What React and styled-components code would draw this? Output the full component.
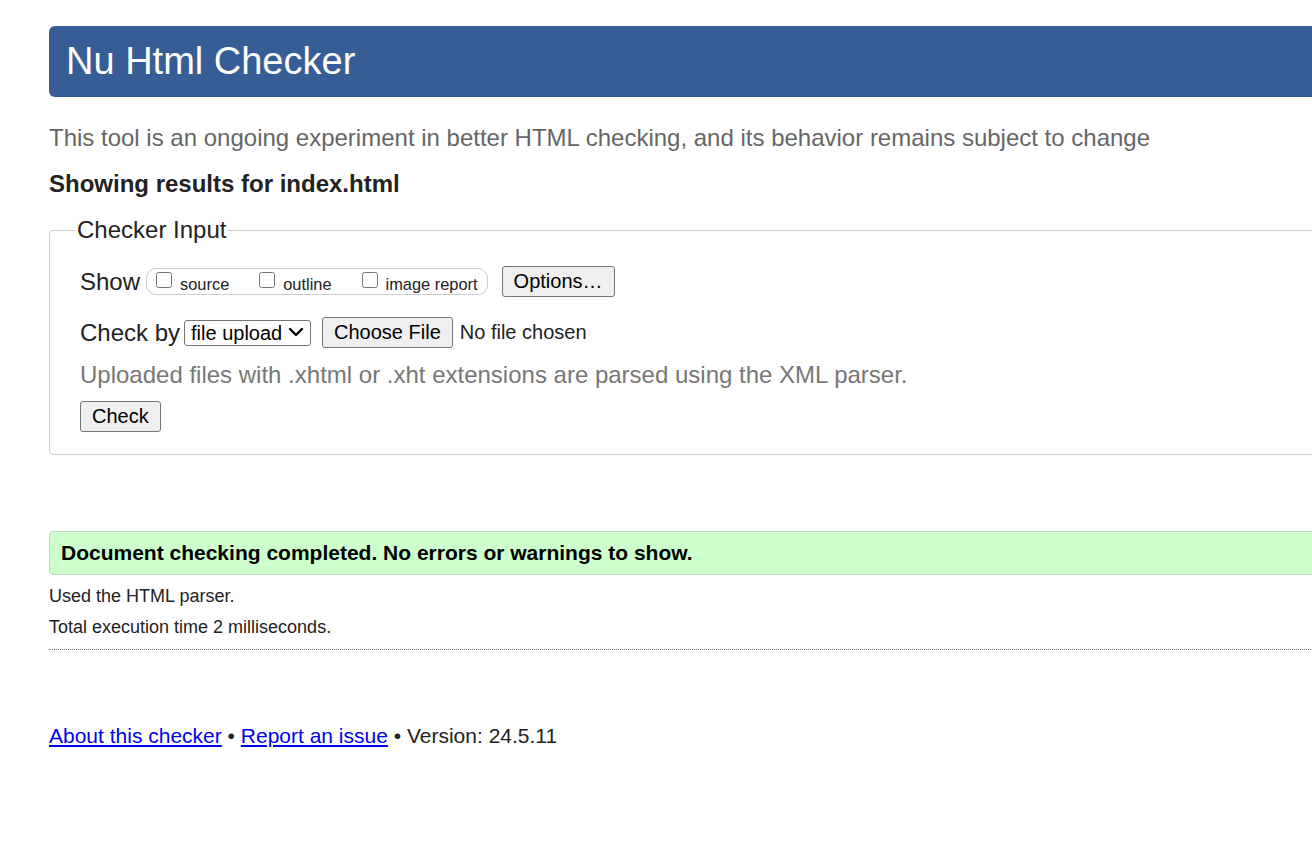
import React from 'react';
import styled, { createGlobalStyle } from 'styled-components';
import { ChevronDown } from 'lucide-react';

const Global = createGlobalStyle`
  html, body {
    margin: 0;
    padding: 0;
    background: #fff;
    overflow: hidden;
  }
  body {
    font-family: "Liberation Sans", Arial, sans-serif;
    color: #222;
  }
`

const Page = styled.div`
  width: 1420px;
  padding: 26px 0 40px 49px;
`
const Banner = styled.h1`
  margin: 0;
  height: 71px;
  display: flex;
  align-items: center;
  padding-left: 17px;
  background: #365d95;
  color: #fff;
  font-size: 38px;
  font-weight: 400;
  border-radius: 6px;
`
const Intro = styled.p`
  margin: 27px 0 0;
  font-size: 24px;
  line-height: 28px;
  color: #666;
`
const Showing = styled.h2`
  margin: 18px 0 0;
  font-size: 24px;
  line-height: 28px;
  font-weight: 700;
  color: #222;
`
const Fieldset = styled.fieldset`
  margin: 18px 0 0;
  padding: 22px 30px 22px 30px;
  border: 1px solid #ccc;
  border-radius: 4px;
  min-width: 0;
`
const Legend = styled.legend`
  font-size: 24px;
  line-height: 28px;
  padding: 0 2px;
  margin-left: -5px;
  color: #222;
`
const Row = styled.div`
  display: flex;
  align-items: center;
  gap: ${p => p.$gap || 10}px;
  margin-top: ${p => p.$mt || 0}px;
`
const Label = styled.span`
  font-size: 24px;
  color: #222;
`
const Group = styled.div`
  display: flex;
  align-items: center;
  height: 25px;
  padding: 0 9px;
  border: 1px solid #ccc;
  border-radius: 10px;
`
const Opt = styled.label`
  display: flex;
  align-items: center;
  font-size: 16.4px;
  color: #222;
  margin-right: ${p => p.$last ? 0 : 30}px;
  & span {
    position: relative;
    top: 3px;
  }
`
const Box = styled.input`
  width: 16px;
  height: 16px;
  margin: 0 8px 0 0;
  position: relative;
  top: -2px;
`
const Button = styled.button`
  font-family: "Liberation Sans", Arial, sans-serif;
  font-size: 20px;
  color: #000;
  height: 31px;
  padding: 0 11px;
  margin-left: ${p => p.$ml || 0}px;
  background: #efefef;
  border: 1px solid #767676;
  border-radius: 3px;
`
const SelectWrap = styled.div`
  position: relative;
  display: flex;
  margin-left: -7px;
`
const Select = styled.select`
  appearance: none;
  font-family: "Liberation Sans", Arial, sans-serif;
  font-size: 20px;
  color: #000;
  width: 127px;
  height: 26px;
  padding: 0 0 0 6px;
  background: #fff;
  border: 1px solid #767676;
  border-radius: 3px;
`
const Chevron = styled(ChevronDown)`
  position: absolute;
  right: 3px;
  top: 0;
  pointer-events: none;
`
const NoFile = styled.span`
  font-size: 20px;
  color: #222;
  margin-left: -4px;
`
const Note = styled.p`
  margin: 13px 0 0;
  font-size: 24px;
  line-height: 28px;
  color: #777;
`
const Success = styled.div`
  margin-top: 76px;
  height: 42px;
  display: flex;
  align-items: center;
  padding-left: 11px;
  background: #ccffcc;
  border: 1px solid #c0d8c0;
  border-radius: 4px;
  font-size: 21px;
  font-weight: 700;
  color: #000;
`
const Detail = styled.p`
  margin: ${p => p.$mt}px 0 0;
  font-size: 18px;
  line-height: 20px;
  color: #222;
`
const Rule = styled.hr`
  margin: 12px 0 0;
  border: 0;
  border-top: 1px dotted #777;
`
const Footer = styled.p`
  margin: 73px 0 0;
  font-size: 21px;
  line-height: 26px;
  color: #222;
  & a {
    color: #0000ee;
  }
`

export default function App() {
  return (
    <Page>
      <Global />
      <Banner>Nu Html Checker</Banner>
      <Intro>This tool is an ongoing experiment in better HTML checking, and its behavior remains subject to change</Intro>
      <Showing>Showing results for index.html</Showing>
      <Fieldset>
        <Legend>Checker Input</Legend>
        <Row $gap={6}>
          <Label>Show</Label>
          <Group>
            <Opt><Box type="checkbox" /><span>source</span></Opt>
            <Opt><Box type="checkbox" /><span>outline</span></Opt>
            <Opt $last><Box type="checkbox" /><span>image report</span></Opt>
          </Group>
          <Button $ml={8}>Options…</Button>
        </Row>
        <Row $gap={11} $mt={20}>
          <Label>Check by</Label>
          <SelectWrap>
            <Select defaultValue="file">
              <option value="address">address</option>
              <option value="file">file upload</option>
              <option value="text">text input</option>
            </Select>
            <Chevron size={24} strokeWidth={2.4} color="#000" />
          </SelectWrap>
          <Button>Choose File</Button>
          <NoFile>No file chosen</NoFile>
        </Row>
        <Note>Uploaded files with .xhtml or .xht extensions are parsed using the XML parser.</Note>
        <Row $mt={12}>
          <Button>Check</Button>
        </Row>
      </Fieldset>
      <Success>Document checking completed. No errors or warnings to show.</Success>
      <Detail $mt={11}>Used the HTML parser.</Detail>
      <Detail $mt={11}>Total execution time 2 milliseconds.</Detail>
      <Rule />
      <Footer>
        <a href="#about">About this checker</a> • <a href="#issue">Report an issue</a> • Version: 24.5.11
      </Footer>
    </Page>
  );
}
